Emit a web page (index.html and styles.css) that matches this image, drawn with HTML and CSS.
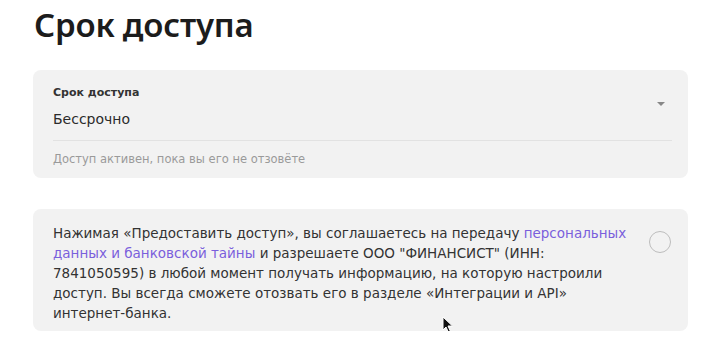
FILE: index.html
```html
<!DOCTYPE html>
<html lang="ru">
<head>
<meta charset="UTF-8">
<title>Срок доступа</title>
<link rel="stylesheet" href="styles.css">
</head>
<body>
    <div class="page">
        <h1 class="title">Срок доступа</h1>

        <div class="card field">
            <div class="field-body">
                <div class="field-text">
                    <div class="field-label">Срок доступа</div>
                    <div class="field-value">Бессрочно</div>
                </div>
                <span class="chevron"></span>
            </div>
            <div class="field-hint">Доступ активен, пока вы его не отзовёте</div>
        </div>

        <div class="card consent">
            <p class="consent-text">
                Нажимая «Предоставить доступ», вы соглашаетесь на передачу <a href="#">персональных данных и банковской тайны</a> и разрешаете ООО "ФИНАНСИСТ" (ИНН: 7841050595) в любой момент получать информацию, на которую настроили доступ. Вы всегда сможете отозвать его в разделе «Интеграции и API» интернет-банка.
            </p>
            <span class="radio"></span>
        </div>

        <svg class="cursor" width="12" height="18" viewBox="0 0 12 18">
            <path d="M1 1 L1 14 L4 11 L6.5 16.5 L8.5 15.5 L6 10 L10.5 10 Z" fill="#111" stroke="#fff" stroke-width="1"/>
        </svg>
    </div>
</body>
</html>
```

FILE: styles.css
```css
body {
    margin: 0;
    background-color: #ffffff;
    font-family: "DejaVu Sans", Arial, sans-serif;
    color: #333;
}

.page {
    position: relative;
    width: 655px;
    padding: 4px 0 0 33px;
}

.title {
    margin: 0 0 24px 1px;
    font-family: "Noto Sans", Arial, sans-serif;
    font-size: 33px;
    font-weight: 600;
    color: #1c1c1c;
    line-height: 42px;
    letter-spacing: -0.2px;
}

.card {
    background-color: #f2f2f2;
    border-radius: 8px;
}

.field {
    padding: 13px 16px 11px 20px;
    margin-bottom: 31px;
}

.field-body {
    display: flex;
    align-items: center;
    justify-content: space-between;
    padding-bottom: 11px;
    border-bottom: 1px solid #e2e2e2;
}

.field-label {
    font-size: 11px;
    font-weight: 600;
    color: #333;
    line-height: 16px;
    margin-top: 2px;
}

.field-value {
    font-size: 14px;
    color: #2b2b2b;
    line-height: 20px;
    margin-top: 8px;
}

.chevron {
    width: 0;
    height: 0;
    border-left: 4px solid transparent;
    border-right: 4px solid transparent;
    border-top: 4px solid #888;
    margin-right: 7px;
    margin-top: -5px;
}

.field-hint {
    font-size: 11.5px;
    color: #9a9a9a;
    line-height: 16px;
    margin-top: 10px;
}

.consent {
    display: flex;
    align-items: flex-start;
    justify-content: space-between;
    padding: 14px 17px 8px 20px;
}

.consent-text {
    margin: 0;
    width: 580px;
    font-size: 13.5px;
    line-height: 20px;
    color: #333;
}

.consent-text a {
    color: #7a5fdc;
    text-decoration: none;
}

.radio {
    width: 20px;
    height: 20px;
    border: 1.5px solid #bdbdbd;
    border-radius: 50%;
    margin-top: 8px;
    flex-shrink: 0;
}

.cursor {
    position: absolute;
    left: 442px;
    top: 316px;
}
```
